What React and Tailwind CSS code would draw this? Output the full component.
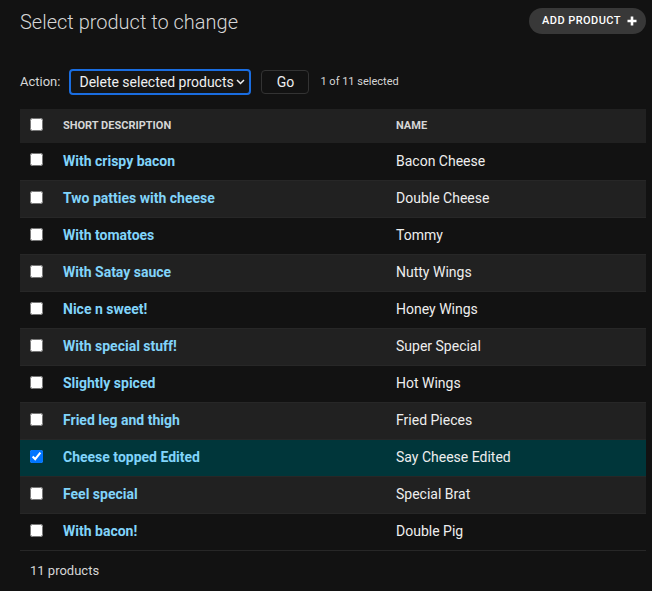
const rows = [
  ['With crispy bacon', 'Bacon Cheese'],
  ['Two patties with cheese', 'Double Cheese'],
  ['With tomatoes', 'Tommy'],
  ['With Satay sauce', 'Nutty Wings'],
  ['Nice n sweet!', 'Honey Wings'],
  ['With special stuff!', 'Super Special'],
  ['Slightly spiced', 'Hot Wings'],
  ['Fried leg and thigh', 'Fried Pieces'],
  ['Cheese topped Edited', 'Say Cheese Edited', true],
  ['Feel special', 'Special Brat'],
  ['With bacon!', 'Double Pig'],
];

export default function App() {
  return (
    <div className="min-h-[591px] bg-[#121212] text-[#eeeeee] font-['Roboto','Liberation_Sans',sans-serif] pl-5 pr-[6px] pt-2">
      <div className="flex items-start justify-between">
        <h1 className="mt-[2px] text-[20px] leading-[24px] font-light text-[#d6d6d6]">Select product to change</h1>
        <a className="flex h-[26px] items-center gap-[6px] rounded-full bg-[#383838] pl-[13px] pr-[9px] text-[11px] font-medium tracking-[0.45px] text-white">
          ADD PRODUCT
          <svg width="10" height="10" viewBox="0 0 10 10">
            <path d="M5 0.5v9M0.5 5h9" stroke="white" strokeWidth="2.6" />
          </svg>
        </a>
      </div>

      <div className="mt-[35px] flex h-[26px] items-center text-[13px]">
        <span className="text-[#d6d6d6]">Action:</span>
        <div className="ml-[9px] flex h-[26px] w-[182px] items-center justify-between rounded-[4px] border-2 border-[#1a6de0] bg-[#151515] pl-[8px] pr-[4px] text-[14px] text-[#f0f0f0]">
          <span>Delete selected products</span>
          <svg width="9" height="6" viewBox="0 0 9 6">
            <path d="M1 1l3.5 3.5L8 1" stroke="#f0f0f0" strokeWidth="1.5" fill="none" />
          </svg>
        </div>
        <button className="ml-[10px] h-6 w-12 rounded-[4px] border border-[#333333] bg-[#121212] text-[14px] text-[#eeeeee]">Go</button>
        <span className="ml-[11px] text-[11px] text-[#d6d6d6]">1 of 11 selected</span>
      </div>

      <table className="mt-[14px] w-full border-collapse text-[14px]">
        <thead>
          <tr className="h-[34px] bg-[#212121]">
            <th className="w-[33px] pl-[10px] pt-[9px] align-top">
              <input type="checkbox" className="m-0 block" readOnly />
            </th>
            <th className="w-[333px] pl-[10px] text-left text-[11px] font-bold text-[#d6d6d6]">SHORT DESCRIPTION</th>
            <th className="pl-[10px] text-left text-[11px] font-bold text-[#d6d6d6]">NAME</th>
          </tr>
        </thead>
        <tbody>
          {rows.map(([desc, name, sel], i) => (
            <tr
              key={desc}
              className={`h-[37px] border-b border-[#272727] ${sel ? 'bg-[#00363a]' : i % 2 ? 'bg-[#212121]' : 'bg-[#121212]'}`}
            >
              <td className="pl-[10px] pt-[10px] align-top">
                <input type="checkbox" className="m-0 block" checked={!!sel} readOnly />
              </td>
              <td className="pl-[10px] font-bold text-[#81d4fa]">{desc}</td>
              <td className="pl-[10px] text-[#eeeeee]">{name}</td>
            </tr>
          ))}
        </tbody>
      </table>

      <p className="pl-[10px] pt-[10px] text-[13px] text-[#d6d6d6]">11 products</p>
    </div>
  );
}
